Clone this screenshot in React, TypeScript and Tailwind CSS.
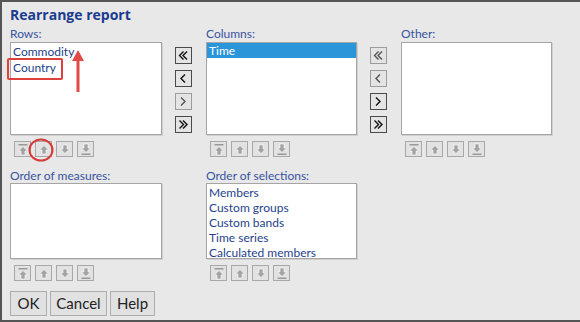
import React from "react";

const font = "font-['Lato','Open_Sans',sans-serif]";

function OrderIcon({ kind }: { kind: "top" | "up" | "down" | "bottom" }) {
  const paths = {
    top: "M6 3.5 L10.5 8 L8 8 L8 12 L4 12 L4 8 L1.5 8 Z",
    up: "M6 2.5 L10.5 7 L8 7 L8 11 L4 11 L4 7 L1.5 7 Z",
    down: "M6 10.5 L10.5 6 L8 6 L8 2 L4 2 L4 6 L1.5 6 Z",
    bottom: "M6 9.5 L10.5 5 L8 5 L8 1 L4 1 L4 5 L1.5 5 Z",
  };
  return (
    <svg width="12" height="13" viewBox="0 0 12 13">
      {kind === "top" && <rect x="1.5" y="1" width="9" height="1.5" fill="#9a9a9a" />}
      {kind === "bottom" && <rect x="1.5" y="10.5" width="9" height="1.5" fill="#9a9a9a" />}
      <path d={paths[kind]} fill="#a3a3a3" stroke="#ffffff" strokeWidth="0.6" />
    </svg>
  );
}

function OrderButtons() {
  return (
    <div className="flex gap-[4px] mt-[6px] ml-[4px]">
      {(["top", "up", "down", "bottom"] as const).map((k) => (
        <div
          key={k}
          className="w-[17px] h-[16px] flex items-center justify-center bg-[#e2e2e2] border border-[#a8a8a8]"
        >
          <OrderIcon kind={k} />
        </div>
      ))}
    </div>
  );
}

function MoveIcon({ dir, double }: { dir: "l" | "r"; double: boolean }) {
  const one = dir === "l" ? "M8 2.5 L4 6.5 L8 10.5" : "M4 2.5 L8 6.5 L4 10.5";
  const two =
    dir === "l"
      ? "M6.5 2.5 L2.5 6.5 L6.5 10.5 M10 2.5 L6 6.5 L10 10.5"
      : "M2.5 2.5 L6.5 6.5 L2.5 10.5 M6 2.5 L10 6.5 L6 10.5";
  return (
    <svg width="13" height="13" viewBox="0 0 13 13">
      <path d={double ? two : one} fill="none" stroke="currentColor" strokeWidth="1.4" />
    </svg>
  );
}

function MoveButtons({ enabled }: { enabled: boolean[] }) {
  const items = [
    { dir: "l" as const, double: true },
    { dir: "l" as const, double: false },
    { dir: "r" as const, double: false },
    { dir: "r" as const, double: true },
  ];
  return (
    <div className="w-[17px] pt-[20px] flex flex-col gap-[6px] shrink-0">
      {items.map((it, i) => (
        <div
          key={i}
          className={
            enabled[i]
              ? "w-[17px] h-[17px] flex items-center justify-center bg-[#e4e4e4] border border-[#4a4a4a] text-[#111]"
              : "w-[17px] h-[17px] flex items-center justify-center bg-[#e4e4e4] border border-[#9c9c9c] text-[#555]"
          }
        >
          <MoveIcon dir={it.dir} double={it.double} />
        </div>
      ))}
    </div>
  );
}

const box = "bg-white border border-[#a5a5a5] shadow-[1px_1px_0_#d0d0d0]";
const label = "h-[13px] text-[12px] leading-[13px] text-[#3853a0]";
const item = "text-[12px] px-[2px] text-[#263f8d]";

export default function App() {
  return (
    <div className={`relative w-[580px] h-[322px] bg-[#e8e8e8] border-t-2 border-l-2 border-b-2 border-[#555] ${font} overflow-hidden`}>
      <div className="pl-[8px] pt-[4px]">
        <div className="text-[14px] leading-[18px] font-bold text-[#1b3b8e] font-['Open_Sans',sans-serif]">
          Rearrange report
        </div>

        {/* top row: rows / columns / other */}
        <div className="flex mt-[3px]">
          <div className="w-[152px] shrink-0">
            <div className={label}>Rows:</div>
            <div className={`mt-[2px] h-[93px] ${box}`}>
              <div className={`${item} leading-[16px] pt-[1px]`}>Commodity</div>
              <div className={`${item} leading-[16px]`}>Country</div>
            </div>
            <OrderButtons />
          </div>
          <div className="w-[13px] shrink-0" />
          <MoveButtons enabled={[true, true, false, true]} />
          <div className="w-[14px] shrink-0" />
          <div className="w-[151px] shrink-0">
            <div className={label}>Columns:</div>
            <div className={`mt-[2px] h-[93px] ${box}`}>
              <div className="leading-[15px] text-[12px] px-[2px] bg-[#2b95d9] text-white">Time</div>
            </div>
            <OrderButtons />
          </div>
          <div className="w-[13px] shrink-0" />
          <MoveButtons enabled={[false, false, true, true]} />
          <div className="w-[14px] shrink-0" />
          <div className="w-[151px] shrink-0">
            <div className={label}>Other:</div>
            <div className={`mt-[2px] h-[93px] ${box}`} />
            <OrderButtons />
          </div>
        </div>

        {/* bottom row: measures / selections */}
        <div className="flex gap-[44px] mt-[12px]">
          <div className="w-[152px] shrink-0">
            <div className={label}>Order of measures:</div>
            <div className={`mt-[1px] h-[76px] ${box}`} />
            <OrderButtons />
          </div>
          <div className="w-[151px] shrink-0">
            <div className={label}>Order of selections:</div>
            <div className={`mt-[1px] h-[76px] pt-[1px] overflow-hidden ${box}`}>
              {["Members", "Custom groups", "Custom bands", "Time series", "Calculated members"].map((t) => (
                <div key={t} className={`${item} leading-[15px]`}>
                  {t}
                </div>
              ))}
            </div>
            <OrderButtons />
          </div>
        </div>

        <div className="flex gap-[3px] mt-[10px]">
          {[
            { t: "OK", w: "w-[37px]" },
            { t: "Cancel", w: "w-[57px]" },
            { t: "Help", w: "w-[45px]" },
          ].map((b) => (
            <div
              key={b.t}
              className={`${b.w} h-[25px] flex items-center justify-center bg-[#e1e1e1] border border-[#adadad] text-[15px] text-[#222]`}
            >
              {b.t}
            </div>
          ))}
        </div>
      </div>

      {/* annotations */}
      <div className="absolute left-[5px] top-[56px] w-[56px] h-[22px] border-2 border-[#e0403c] rounded-[2px]" />
      <svg className="absolute left-[66px] top-[46px]" width="20" height="46" viewBox="0 0 20 46">
        <path d="M10 2 L16 13 L11.5 13 L11.5 44 L8.5 44 L8.5 13 L4 13 Z" fill="#e24a45" />
      </svg>
      <svg className="absolute left-[26px] top-[136px]" width="26" height="24" viewBox="0 0 26 24">
        <ellipse cx="13" cy="12" rx="11.5" ry="10.5" fill="none" stroke="#d63b38" strokeWidth="2" />
      </svg>
    </div>
  );
}
